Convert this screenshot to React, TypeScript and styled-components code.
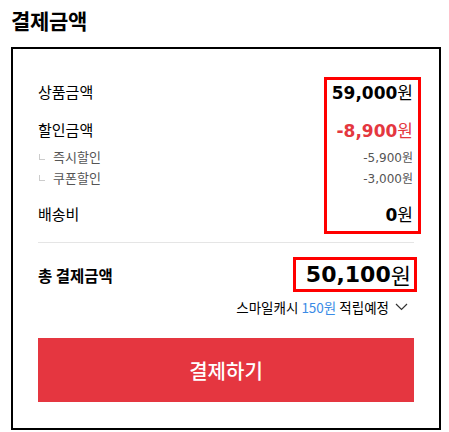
import styled, { createGlobalStyle } from "styled-components";

type Line = {
  label: string;
  amount: string;
  kind: "main" | "discount" | "sub";
  gap: number;
};

const lines: Line[] = [
  { label: "상품금액", amount: "59,000", kind: "main", gap: 0 },
  { label: "할인금액", amount: "-8,900", kind: "discount", gap: 16 },
  { label: "즉시할인", amount: "-5,900", kind: "sub", gap: 6 },
  { label: "쿠폰할인", amount: "-3,000", kind: "sub", gap: 1 },
  { label: "배송비", amount: "0", kind: "main", gap: 15 },
];

const GlobalStyle = createGlobalStyle`
  body {
    margin: 0;
    background: #fff;
    color: #000;
    font-family: "Noto Sans CJK KR", "Noto Sans", sans-serif;
  }
`;

export default function App() {
  return (
    <>
      <GlobalStyle />
      <Page>
        <Title>결제금액</Title>

        <Card>
          <Summary>
            {lines.map((line) => (
              <Row key={line.label} $kind={line.kind} $gap={line.gap}>
                <Label $kind={line.kind}>
                  {line.kind === "sub" && <SubMark />}
                  {line.label}
                </Label>
                <Amount $kind={line.kind}>
                  {line.amount}
                  <Won>원</Won>
                </Amount>
              </Row>
            ))}
            <Highlight />
          </Summary>

          <Divider />

          <TotalRow>
            <TotalLabel>총 결제금액</TotalLabel>
            <TotalAmount>
              50,100<Won>원</Won>
            </TotalAmount>
          </TotalRow>

          <CashNote>
            <span>
              스마일캐시 <CashValue>150원</CashValue> 적립예정
            </span>
            <svg width="13" height="8" viewBox="0 0 13 8" aria-hidden="true">
              <polyline
                points="1,1 6.5,6.5 12,1"
                fill="none"
                stroke="#333"
                strokeWidth="1.2"
              />
            </svg>
          </CashNote>

          <PayButton type="button">결제하기</PayButton>
        </Card>
      </Page>
    </>
  );
}

const Page = styled.div`
  padding: 0 8px 0 11px;
`;

const Title = styled.h1`
  margin: 0;
  padding-top: 6px;
  height: 41px;
  font-size: 21px;
  line-height: 28px;
  font-weight: 700;
  letter-spacing: -0.3px;
`;

const Card = styled.section`
  width: 430px;
  box-sizing: border-box;
  border: 2px solid #000;
  padding: 31px 25px 26px;
  display: flex;
  flex-direction: column;
`;

const Summary = styled.div`
  position: relative;
  display: flex;
  flex-direction: column;
`;

const Row = styled.div<{ $kind: Line["kind"]; $gap: number }>`
  display: flex;
  align-items: center;
  justify-content: space-between;
  height: ${(p) => (p.$kind === "sub" ? 20 : 22)}px;
  margin-top: ${(p) => p.$gap}px;
`;

const Label = styled.span<{ $kind: Line["kind"] }>`
  display: flex;
  align-items: center;
  font-size: ${(p) => (p.$kind === "sub" ? 13 : 15)}px;
  color: ${(p) => (p.$kind === "sub" ? "#555" : "#000")};
`;

const SubMark = styled.span`
  width: 5px;
  height: 5px;
  margin: 0 8px -1px 1px;
  border-left: 1px solid #ccc;
  border-bottom: 1px solid #ccc;
`;

const Amount = styled.span<{ $kind: Line["kind"] }>`
  font-family: "DejaVu Sans", "Noto Sans CJK KR", sans-serif;
  font-size: ${(p) => (p.$kind === "sub" ? 12 : 17)}px;
  font-weight: ${(p) => (p.$kind === "sub" ? 400 : 700)};
  color: ${(p) =>
    p.$kind === "discount" ? "#e4373f" : p.$kind === "sub" ? "#555" : "#000"};
  padding-right: 1px;
`;

const Won = styled.span`
  font-family: "Noto Sans CJK KR", sans-serif;
  font-weight: 400;
`;

const Highlight = styled.div`
  position: absolute;
  top: -3px;
  bottom: -10px;
  right: -7px;
  width: 97px;
  box-sizing: border-box;
  border: 3px solid #ff0000;
  pointer-events: none;
`;

const Divider = styled.hr`
  margin: 18px 0 0;
  border: 0;
  height: 1px;
  background: #e5e5e5;
`;

const TotalRow = styled.div`
  margin-top: 14px;
  display: flex;
  align-items: center;
  justify-content: space-between;
`;

const TotalLabel = styled.span`
  font-size: 15.5px;
  font-weight: 700;
`;

const TotalAmount = styled.span`
  display: inline-flex;
  align-items: center;
  height: 35px;
  box-sizing: border-box;
  margin-right: -3px;
  padding: 0 3px 0 10px;
  border: 3px solid #ff0000;
  font-family: "DejaVu Sans", "Noto Sans CJK KR", sans-serif;
  font-size: 22px;
  font-weight: 700;
  line-height: 29px;
`;

const CashNote = styled.div`
  margin-top: 5px;
  height: 20px;
  display: flex;
  align-items: center;
  justify-content: flex-end;
  gap: 6px;
  padding-right: 6px;
  font-size: 13.5px;
  line-height: 20px;
`;

const CashValue = styled.span`
  color: #3a8be6;
`;

const PayButton = styled.button`
  margin-top: 21px;
  height: 64px;
  border: 0;
  background: #e53640;
  color: #fff;
  font-family: "Noto Sans CJK KR", sans-serif;
  font-size: 20px;
  font-weight: 500;
  cursor: pointer;
`;
